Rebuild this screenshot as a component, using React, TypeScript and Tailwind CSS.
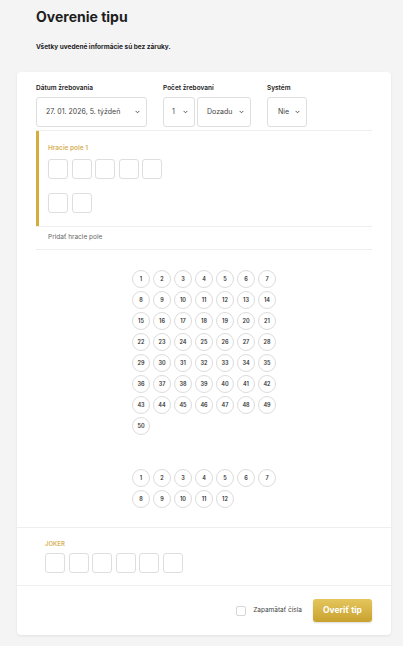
import type { ReactNode } from "react";

const font = { fontFamily: "Inter, 'Noto Sans', sans-serif" };

function Chevron() {
  return (
    <svg width="5" height="4" viewBox="0 0 5 4" className="shrink-0">
      <path d="M0.6 0.9 L2.5 2.8 L4.4 0.9" fill="none" stroke="#444" strokeWidth="0.9" />
    </svg>
  );
}

function Select({ value, className }: { value: string; className: string }) {
  return (
    <div
      className={`flex h-[30px] items-center justify-between rounded-[3px] border border-[#dedede] bg-white text-[7px] text-[#444] ${className}`}
    >
      <span>{value}</span>
      <Chevron />
    </div>
  );
}

function Field({ label, children }: { label: string; children: ReactNode }) {
  return (
    <div className="flex flex-col gap-[5px]">
      <span className="text-[6.5px] font-semibold leading-[8px] text-[#222]">{label}</span>
      <div className="flex gap-[2px]">{children}</div>
    </div>
  );
}

function Box() {
  return <div className="h-[20px] w-[20px] rounded-[3px] border border-[#dedede] bg-white" />;
}

function Ball({ n }: { n: number }) {
  return (
    <div className="flex h-[18px] w-[18px] items-center justify-center rounded-full border border-[#dcdcdc] text-[5.5px] font-semibold text-[#333]">
      {n}
    </div>
  );
}

function Balls({ count }: { count: number }) {
  return (
    <div className="grid grid-cols-[repeat(7,18px)] justify-center gap-[3px]">
      {Array.from({ length: count }, (_, i) => (
        <Ball key={i} n={i + 1} />
      ))}
    </div>
  );
}

export default function App() {
  return (
    <main className="h-[646px] w-[403px] overflow-hidden bg-[#f4f4f4]" style={font}>
      <header className="px-[36px] pt-[8px]">
        <h1 className="text-[14px] font-bold leading-[18px] text-[#1d1d1f]">Overenie tipu</h1>
        <p className="mt-[17px] text-[6.5px] font-bold leading-[8px] text-[#1d1d1f]">
          Všetky uvedené informácie sú bez záruky.
        </p>
      </header>

      <section className="ml-[17px] mt-[21px] w-[374px] rounded-[4px] bg-white shadow-[0_1px_3px_rgba(0,0,0,0.08)]">
        <div className="px-[19px]">
          <div className="flex gap-[16px] pt-[12px] pb-[3px]">
            <Field label="Dátum žrebovania">
              <Select value="27. 01. 2026, 5. týždeň" className="w-[111px] pl-[9px] pr-[6px]" />
            </Field>
            <Field label="Počet žrebovaní">
              <Select value="1" className="w-[32px] pl-[8px] pr-[6px]" />
              <Select value="Dozadu" className="w-[54px] pl-[9px] pr-[6px]" />
            </Field>
            <Field label="Systém">
              <Select value="Nie" className="w-[40px] pl-[10px] pr-[6px]" />
            </Field>
          </div>

          <div className="border-t border-[#eeeeee]">
            <div className="border-l-[3px] border-[#d4ad3c] pl-[9px] pt-[13px] pb-[13px]">
              <span className="block text-[6.5px] font-semibold leading-[8px] text-[#d8b25a]">Hracie pole 1</span>
              <div className="mt-[7px] flex w-[120px] flex-wrap gap-x-[3.5px] gap-y-[14px]">
                {Array.from({ length: 7 }, (_, i) => (
                  <Box key={i} />
                ))}
              </div>
            </div>
          </div>

          <div className="flex h-[24px] items-center border-y border-[#eeeeee] pl-[12px] text-[6.5px] text-[#666]">
            Pridať hracie pole
          </div>

          <div className="pt-[20px]">
            <Balls count={50} />
          </div>
          <div className="pt-[34px] pb-[19px]">
            <Balls count={12} />
          </div>
        </div>

        <div className="border-t border-[#eeeeee] px-[28px] pt-[12px] pb-[12px]">
          <span className="block text-[6px] font-semibold leading-[8px] text-[#d8b25a]">JOKER</span>
          <div className="mt-[5px] flex gap-[3.5px]">
            {Array.from({ length: 6 }, (_, i) => (
              <Box key={i} />
            ))}
          </div>
        </div>

        <div className="flex h-[50px] items-center justify-end border-t border-[#eeeeee] pr-[19px]">
          <div className="flex items-center gap-[7px]">
            <div className="h-[10px] w-[10px] rounded-[2px] border border-[#d6d6d6] bg-white" />
            <span className="text-[6.5px] text-[#444]">Zapamätať čísla</span>
          </div>
          <button className="ml-[11px] h-[23px] w-[59px] rounded-[3px] bg-gradient-to-b from-[#e4c65c] to-[#c9a22d] text-[8.5px] font-bold text-white shadow-[0_1px_2px_rgba(0,0,0,0.15)]">
            Overiť tip
          </button>
        </div>
      </section>
    </main>
  );
}
